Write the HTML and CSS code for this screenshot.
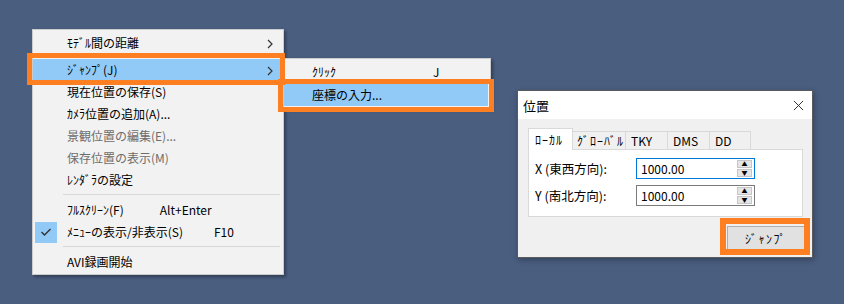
FILE: index.html
```html
<!DOCTYPE html>
<html lang="ja">
<head>
  <meta charset="UTF-8" />
  <title>ジャンプ</title>
  <link rel="stylesheet" href="styles.css">
</head>
<body>
  <div class="desktop">

    <!-- context menu -->
    <div class="menu main-menu">
      <div class="item first"><span class="gutter"></span><span class="label">ﾓﾃﾞﾙ間の距離</span><svg class="arrow" viewBox="0 0 6 10"><polyline points="1,1 5,5 1,9"/></svg></div>
      <div class="item hot"><span class="gutter"></span><span class="label">ｼﾞｬﾝﾌﾟ(J)</span><svg class="arrow" viewBox="0 0 6 10"><polyline points="1,1 5,5 1,9"/></svg></div>
      <div class="item"><span class="gutter"></span><span class="label">現在位置の保存(S)</span></div>
      <div class="item"><span class="gutter"></span><span class="label">ｶﾒﾗ位置の追加(A)...</span></div>
      <div class="item off"><span class="gutter"></span><span class="label">景観位置の編集(E)...</span></div>
      <div class="item off"><span class="gutter"></span><span class="label">保存位置の表示(M)</span></div>
      <div class="item"><span class="gutter"></span><span class="label">ﾚﾝﾀﾞﾗの設定</span></div>
      <div class="sep"></div>
      <div class="item"><span class="gutter"></span><span class="label">ﾌﾙｽｸﾘｰﾝ(F)</span><span class="accel accel-full">Alt+Enter</span></div>
      <div class="item"><span class="gutter"><span class="check"><svg viewBox="0 0 12 10"><polyline points="1.5,5 4.5,8 10.5,2"/></svg></span></span><span class="label">ﾒﾆｭｰの表示/非表示(S)</span><span class="accel accel-menu">F10</span></div>
      <div class="sep"></div>
      <div class="item"><span class="gutter"></span><span class="label">AVI録画開始</span></div>
    </div>

    <!-- submenu -->
    <div class="menu sub-menu">
      <div class="item"><span class="label sub-label">ｸﾘｯｸ</span><span class="sub-key">J</span></div>
      <div class="item hot"><span class="label">座標の入力...</span></div>
    </div>

    <!-- dialog -->
    <div class="dialog">
      <div class="titlebar">
        <span class="title">位置</span>
        <svg class="close" viewBox="0 0 12 12"><path d="M1 1 L11 11 M11 1 L1 11"/></svg>
      </div>
      <div class="dialog-body">
        <div class="tabs">
          <div class="tab active kana">ﾛｰｶﾙ</div>
          <div class="tab kana">ｸﾞﾛｰﾊﾞﾙ</div>
          <div class="tab">TKY</div>
          <div class="tab">DMS</div>
          <div class="tab">DD</div>
        </div>
        <div class="panel">
          <div class="field">
            <span class="field-label">X (東西方向):</span>
            <div class="input focus">
              <span>1000.00</span>
              <div class="spin"><span class="spin-btn">▲</span><span class="spin-btn">▼</span></div>
            </div>
          </div>
          <div class="field">
            <span class="field-label">Y (南北方向):</span>
            <div class="input">
              <span>1000.00</span>
              <div class="spin"><span class="spin-btn">▲</span><span class="spin-btn">▼</span></div>
            </div>
          </div>
        </div>
        <div class="buttons">
          <button class="btn">ｼﾞｬﾝﾌﾟ</button>
        </div>
      </div>
    </div>

    <!-- orange markers -->
    <div class="mark mark-jump"></div>
    <div class="mark mark-coord"></div>
    <div class="mark mark-btn"></div>
  </div>
</body>
</html>
```

FILE: styles.css
```css
body {
  margin: 0;
  padding: 0;
  font-family: "Noto Sans CJK JP", "Noto Sans", sans-serif;
  font-size: 12px;
  color: #000;
}

.desktop {
  position: relative;
  width: 844px;
  height: 304px;
  background-color: #4a5e80;
  overflow: hidden;
}

/* menus */

.menu {
  position: absolute;
  background: #f2f2f2;
  border: 1px solid #cccccc;
  box-shadow: 2px 2px 3px rgba(0,0,0,0.35);
  box-sizing: border-box;
}

.main-menu {
  left: 32px;
  top: 29px;
  width: 252px;
  height: 246px;
  padding-top: 2px;
}

.item {
  display: flex;
  align-items: center;
  height: 22px;
  line-height: 22px;
  white-space: nowrap;
  position: relative;
}

.item.first {
  margin-bottom: 5px;
}

.item.hot {
  background: #91c9f7;
}

.item.off {
  color: #6d6d6d;
}

.gutter {
  width: 34px;
  height: 22px;
  flex: none;
  display: flex;
  align-items: center;
}

.check {
  margin-left: 2px;
  width: 22px;
  height: 21px;
  background: #91c9f7;
  display: flex;
  align-items: center;
  justify-content: center;
}

.check svg {
  width: 12px;
  height: 10px;
  fill: none;
  stroke: #333;
  stroke-width: 1.4;
}

.arrow {
  position: absolute;
  left: 234px;
  top: 7px;
  width: 6px;
  height: 10px;
  fill: none;
  stroke: #333;
  stroke-width: 1.2;
}

.accel-full {
  margin-left: 36px;
}

.accel-menu {
  margin-left: 31px;
}

.sep {
  height: 1px;
  background: #d7d7d7;
  margin: 3px 3px 4px 30px;
}

.sub-menu {
  left: 283px;
  top: 58px;
  width: 208px;
  height: 50px;
  padding-top: 2px;
}

.sub-menu .item {
  padding-left: 28px;
}

.sub-menu .item.hot {
  margin: 1px 2px 0 0;
}

.sub-label {
  width: 121px;
}

/* dialog */

.dialog {
  position: absolute;
  left: 517px;
  top: 90px;
  width: 296px;
  height: 168px;
  box-sizing: border-box;
  border: 1px solid #5a5a5a;
  background: #f0f0f0;
  box-shadow: 1px 2px 6px rgba(0,0,0,0.3);
}

.titlebar {
  height: 28px;
  background: #fff;
  display: flex;
  align-items: center;
  justify-content: space-between;
  padding: 0 7px 0 5px;
}

.title {
  font-size: 13px;
}

.close {
  width: 11px;
  height: 11px;
  stroke: #222;
  stroke-width: 1;
  fill: none;
  margin-right: 1px;
}

.dialog-body {
  padding: 9px 9px 0 10px;
}

.tabs {
  display: flex;
  align-items: flex-end;
  height: 21px;
  padding-left: 1px;
  position: relative;
  z-index: 1;
}

.tab {
  height: 18px;
  line-height: 18px;
  border: 1px solid #d9d9d9;
  border-bottom: none;
  box-sizing: border-box;
  padding-left: 5px;
  margin-left: -1px;
  background: #f0f0f0;
  white-space: nowrap;
}

.tab.kana {
  letter-spacing: 1px;
}

.tab:nth-child(1) { width: 45px; }
.tab:nth-child(2) { width: 54px; padding-left: 4px; }
.tab:nth-child(3) { width: 43px; }
.tab:nth-child(4) { width: 43px; }
.tab:nth-child(5) { width: 42px; }

.tab.active {
  height: 22px;
  line-height: 21px;
  background: #fff;
  margin-bottom: -1px;
  padding-left: 6px;
}

.panel {
  height: 68px;
  box-sizing: border-box;
  background: #fff;
  border: 1px solid #d9d9d9;
  padding: 8px 0 0 6px;
  display: flex;
  flex-direction: column;
  gap: 6px;
}

.field {
  display: flex;
  align-items: center;
  height: 21px;
}

.field-label {
  width: 101px;
  font-size: 12.5px;
}

.input {
  width: 119px;
  height: 21px;
  box-sizing: border-box;
  border: 1px solid #7a7a7a;
  display: flex;
  align-items: center;
  justify-content: space-between;
  padding: 0 2px 0 4px;
}

.input.focus {
  border-color: #0078d7;
}

.spin {
  display: flex;
  flex-direction: column;
  gap: 1px;
}

.spin-btn {
  width: 15px;
  height: 8px;
  box-sizing: border-box;
  background: #e5e5e5;
  border: 1px solid #c6c6c6;
  font-size: 6px;
  line-height: 6px;
  text-align: center;
  color: #000;
}

.buttons {
  display: flex;
  justify-content: flex-end;
  padding: 9px 0 0 0;
  margin-right: -2px;
}

.btn {
  width: 78px;
  height: 24px;
  background: #e1e1e1;
  border: 1px solid #adadad;
  font-family: "Noto Sans CJK JP", sans-serif;
  font-size: 12px;
  letter-spacing: 1.5px;
  color: #000;
  padding: 0;
}

/* orange markers */

.mark {
  position: absolute;
  border: 5px solid #fe7f22;
  box-sizing: border-box;
}

.mark-jump {
  left: 27px;
  top: 53px;
  width: 258px;
  height: 32px;
}

.mark-coord {
  left: 278px;
  top: 79px;
  width: 216px;
  height: 33px;
}

.mark-btn {
  left: 720px;
  top: 218px;
  width: 90px;
  height: 37px;
  border-width: 6px;
}
```
